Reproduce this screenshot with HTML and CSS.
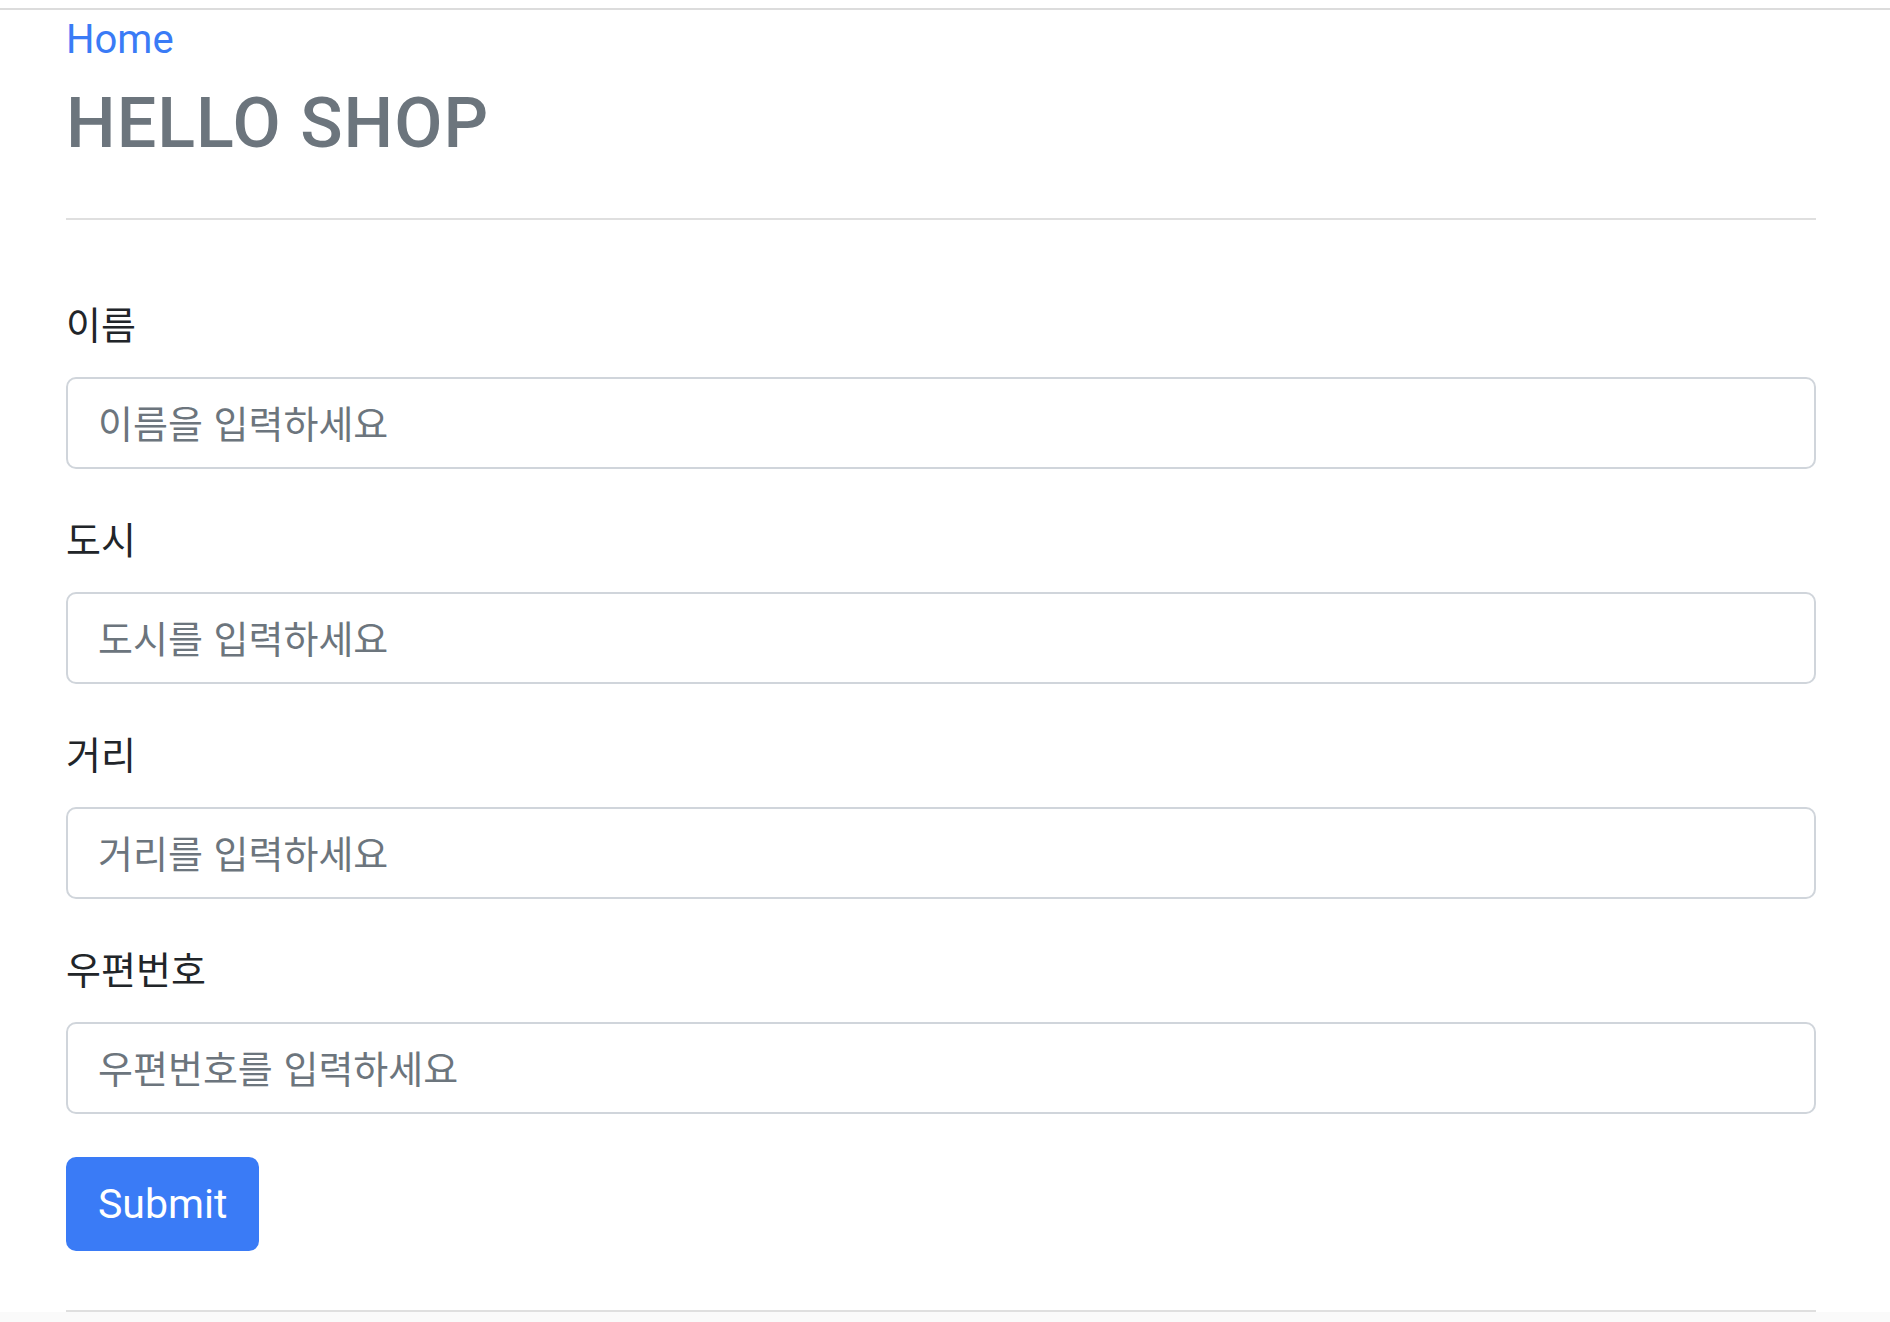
FILE: index.html
```html
<!DOCTYPE html>
<html lang="ko">
<head>
  <meta charset="UTF-8">
  <title>HELLO SHOP</title>
  <link rel="stylesheet" href="styles.css">
</head>
<body>
  <div class="topline"></div>

  <div class="container">
    <a class="home" href="#">Home</a>
    <h3 class="title">HELLO SHOP</h3>
    <hr class="rule">

    <form class="member-form" onsubmit="return false">
      <div class="field">
        <label for="name">이름</label>
        <input type="text" id="name" placeholder="이름을 입력하세요">
      </div>
      <div class="field">
        <label for="city">도시</label>
        <input type="text" id="city" placeholder="도시를 입력하세요">
      </div>
      <div class="field">
        <label for="street">거리</label>
        <input type="text" id="street" placeholder="거리를 입력하세요">
      </div>
      <div class="field">
        <label for="zipcode">우편번호</label>
        <input type="text" id="zipcode" placeholder="우편번호를 입력하세요">
      </div>
      <button type="submit" class="btn">Submit</button>
    </form>

    <hr class="rule footer-rule">
  </div>

  <div class="footer"></div>
</body>
</html>
```

FILE: styles.css
```css
body {
  margin: 0;
  font-family: Roboto, "Noto Sans CJK KR", sans-serif;
  font-size: 40px;
  line-height: 60px;
  color: #212529;
  background-color: #fff;
}

.topline {
  margin-top: 8px;
  border-top: 2px solid #dcdcdc;
}

.container {
  width: 1750px;
  padding-left: 66px;
}

.home {
  display: block;
  width: max-content;
  color: #3a7bf6;
  text-decoration: none;
}

.title {
  margin: 11px 0 0;
  font-size: 70px;
  font-weight: 500;
  line-height: 84px;
  letter-spacing: 1px;
  color: #6c757d;
}

.rule {
  height: 0;
  margin: 53px 0 0;
  border: 0;
  border-top: 2px solid #dfdfdf;
}

.member-form {
  padding-top: 77px;
}

.field {
  margin-bottom: 43px;
}

.field label {
  display: block;
  margin-bottom: 28px;
  font-family: "Noto Sans CJK KR", sans-serif;
  font-size: 38px;
  line-height: 52px;
  color: #212529;
}

.field input {
  display: block;
  box-sizing: border-box;
  width: 100%;
  height: 92px;
  margin: 0;
  padding: 0 30px 4px;
  border: 2px solid #d0d5db;
  border-radius: 10px;
  font-family: "Noto Sans CJK KR", sans-serif;
  font-size: 38px;
  color: #212529;
  background-color: #fff;
  outline: none;
}

.field input::placeholder {
  color: #6c757d;
}

.btn {
  display: block;
  height: 94px;
  padding: 0 32px;
  border: 0;
  border-radius: 10px;
  font-family: Roboto, sans-serif;
  font-size: 41px;
  line-height: 60px;
  color: #fff;
  background-color: #3a7bf6;
  cursor: pointer;
}

.footer-rule {
  margin-top: 59px;
}

.footer {
  height: 40px;
  background-color: #fafafa;
}
```
